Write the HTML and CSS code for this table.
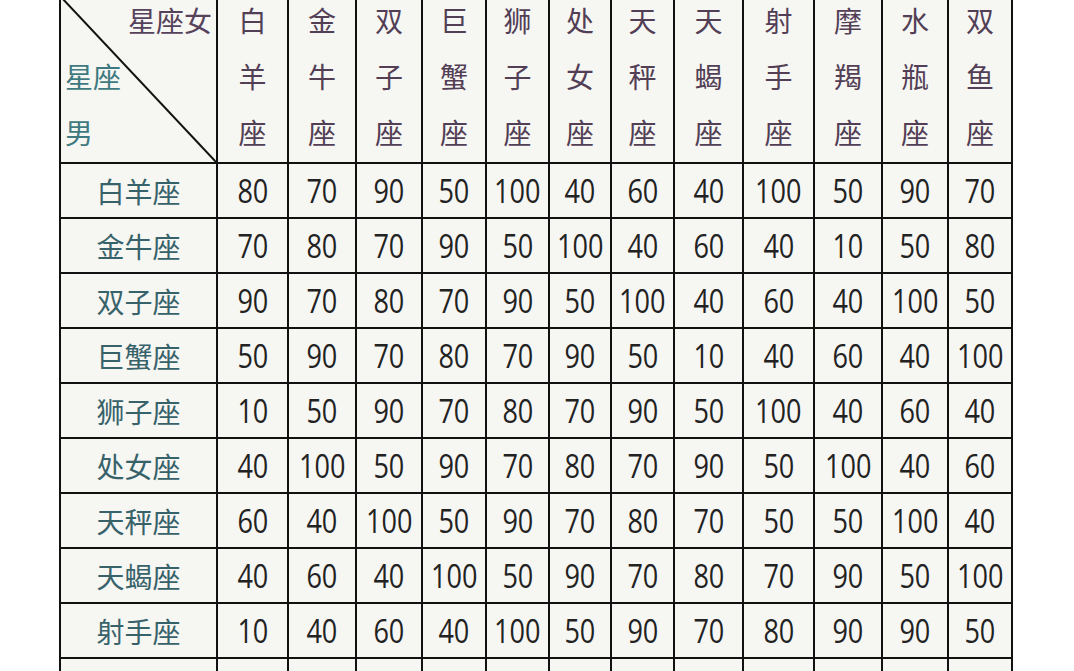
FILE: index.html
```html
<!DOCTYPE html>
<html lang="zh">
<head>
<meta charset="utf-8">
<title>星座配对表</title>
<link rel="stylesheet" href="styles.css">
</head>
<body>
<div class="chart">
  <div class="corner">
    <svg class="diag" viewBox="0 0 100 100" preserveAspectRatio="none"><line x1="0" y1="0" x2="100" y2="100" stroke="#111" stroke-width="2" vector-effect="non-scaling-stroke"/></svg>
    <span class="c-f">星座女</span>
    <span class="c-m">星座</span>
    <span class="c-m">男</span>
  </div>
  <div class="hd"><span>白</span><span>羊</span><span>座</span></div>
  <div class="hd"><span>金</span><span>牛</span><span>座</span></div>
  <div class="hd"><span>双</span><span>子</span><span>座</span></div>
  <div class="hd"><span>巨</span><span>蟹</span><span>座</span></div>
  <div class="hd"><span>狮</span><span>子</span><span>座</span></div>
  <div class="hd"><span>处</span><span>女</span><span>座</span></div>
  <div class="hd"><span>天</span><span>秤</span><span>座</span></div>
  <div class="hd"><span>天</span><span>蝎</span><span>座</span></div>
  <div class="hd"><span>射</span><span>手</span><span>座</span></div>
  <div class="hd"><span>摩</span><span>羯</span><span>座</span></div>
  <div class="hd"><span>水</span><span>瓶</span><span>座</span></div>
  <div class="hd"><span>双</span><span>鱼</span><span>座</span></div>

  <div class="rl">白羊座</div><div class="n"><span>80</span></div><div class="n"><span>70</span></div><div class="n"><span>90</span></div><div class="n"><span>50</span></div><div class="n"><span>100</span></div><div class="n"><span>40</span></div><div class="n"><span>60</span></div><div class="n"><span>40</span></div><div class="n"><span>100</span></div><div class="n"><span>50</span></div><div class="n"><span>90</span></div><div class="n"><span>70</span></div>
  <div class="rl">金牛座</div><div class="n"><span>70</span></div><div class="n"><span>80</span></div><div class="n"><span>70</span></div><div class="n"><span>90</span></div><div class="n"><span>50</span></div><div class="n"><span>100</span></div><div class="n"><span>40</span></div><div class="n"><span>60</span></div><div class="n"><span>40</span></div><div class="n"><span>10</span></div><div class="n"><span>50</span></div><div class="n"><span>80</span></div>
  <div class="rl">双子座</div><div class="n"><span>90</span></div><div class="n"><span>70</span></div><div class="n"><span>80</span></div><div class="n"><span>70</span></div><div class="n"><span>90</span></div><div class="n"><span>50</span></div><div class="n"><span>100</span></div><div class="n"><span>40</span></div><div class="n"><span>60</span></div><div class="n"><span>40</span></div><div class="n"><span>100</span></div><div class="n"><span>50</span></div>
  <div class="rl">巨蟹座</div><div class="n"><span>50</span></div><div class="n"><span>90</span></div><div class="n"><span>70</span></div><div class="n"><span>80</span></div><div class="n"><span>70</span></div><div class="n"><span>90</span></div><div class="n"><span>50</span></div><div class="n"><span>10</span></div><div class="n"><span>40</span></div><div class="n"><span>60</span></div><div class="n"><span>40</span></div><div class="n"><span>100</span></div>
  <div class="rl">狮子座</div><div class="n"><span>10</span></div><div class="n"><span>50</span></div><div class="n"><span>90</span></div><div class="n"><span>70</span></div><div class="n"><span>80</span></div><div class="n"><span>70</span></div><div class="n"><span>90</span></div><div class="n"><span>50</span></div><div class="n"><span>100</span></div><div class="n"><span>40</span></div><div class="n"><span>60</span></div><div class="n"><span>40</span></div>
  <div class="rl">处女座</div><div class="n"><span>40</span></div><div class="n"><span>100</span></div><div class="n"><span>50</span></div><div class="n"><span>90</span></div><div class="n"><span>70</span></div><div class="n"><span>80</span></div><div class="n"><span>70</span></div><div class="n"><span>90</span></div><div class="n"><span>50</span></div><div class="n"><span>100</span></div><div class="n"><span>40</span></div><div class="n"><span>60</span></div>
  <div class="rl">天秤座</div><div class="n"><span>60</span></div><div class="n"><span>40</span></div><div class="n"><span>100</span></div><div class="n"><span>50</span></div><div class="n"><span>90</span></div><div class="n"><span>70</span></div><div class="n"><span>80</span></div><div class="n"><span>70</span></div><div class="n"><span>50</span></div><div class="n"><span>50</span></div><div class="n"><span>100</span></div><div class="n"><span>40</span></div>
  <div class="rl">天蝎座</div><div class="n"><span>40</span></div><div class="n"><span>60</span></div><div class="n"><span>40</span></div><div class="n"><span>100</span></div><div class="n"><span>50</span></div><div class="n"><span>90</span></div><div class="n"><span>70</span></div><div class="n"><span>80</span></div><div class="n"><span>70</span></div><div class="n"><span>90</span></div><div class="n"><span>50</span></div><div class="n"><span>100</span></div>
  <div class="rl">射手座</div><div class="n"><span>10</span></div><div class="n"><span>40</span></div><div class="n"><span>60</span></div><div class="n"><span>40</span></div><div class="n"><span>100</span></div><div class="n"><span>50</span></div><div class="n"><span>90</span></div><div class="n"><span>70</span></div><div class="n"><span>80</span></div><div class="n"><span>90</span></div><div class="n"><span>90</span></div><div class="n"><span>50</span></div>
  <div class="rl">摩羯座</div><div class="n"><span>50</span></div><div class="n"><span>10</span></div><div class="n"><span>40</span></div><div class="n"><span>60</span></div><div class="n"><span>40</span></div><div class="n"><span>100</span></div><div class="n"><span>50</span></div><div class="n"><span>90</span></div><div class="n"><span>90</span></div><div class="n"><span>80</span></div><div class="n"><span>60</span></div><div class="n"><span>40</span></div>
</div>
</body>
</html>
```
FILE: styles.css
```css
html, body {
  margin: 0;
  padding: 0;
  background: #ffffff;
  overflow: hidden;
}

body {
  font-family: "Noto Sans CJK SC", "Noto Sans", sans-serif;
}

.chart {
  display: grid;
  grid-template-columns: 155px 69px 66px 64px 62px 61px 60px 61px 67px 69px 66px 64px 62px;
  grid-template-rows: 165px repeat(10, 53px);
  gap: 2px;
  padding: 2px;
  background: #111111;
  width: max-content;
  margin: -5px 0 0 59px;
}

.chart > div {
  background: #f6f6f3;
}

.corner {
  position: relative;
  display: flex;
  flex-direction: column;
  justify-content: flex-end;
  padding: 0 4px 2px 4px;
  font-size: 28px;
  line-height: 56px;
}

.diag {
  position: absolute;
  left: 0;
  top: 0;
  width: 100%;
  height: 100%;
}

.c-f {
  text-align: right;
  color: #57425c;
}

.c-m {
  text-align: left;
  color: #3f7a80;
}

.hd {
  display: flex;
  flex-direction: column;
  justify-content: flex-end;
  align-items: center;
  padding-bottom: 2px;
  font-size: 28px;
  line-height: 56px;
  color: #523e55;
}

.rl {
  display: flex;
  align-items: center;
  justify-content: center;
  font-size: 28px;
  color: #37626a;
}

.n {
  display: flex;
  align-items: center;
  justify-content: center;
  font-family: "Open Sans", "Noto Sans", sans-serif;
  font-size: 33px;
  color: #222222;
}

.n span {
  display: inline-block;
  transform: scaleX(0.82);
  white-space: nowrap;
}
```
